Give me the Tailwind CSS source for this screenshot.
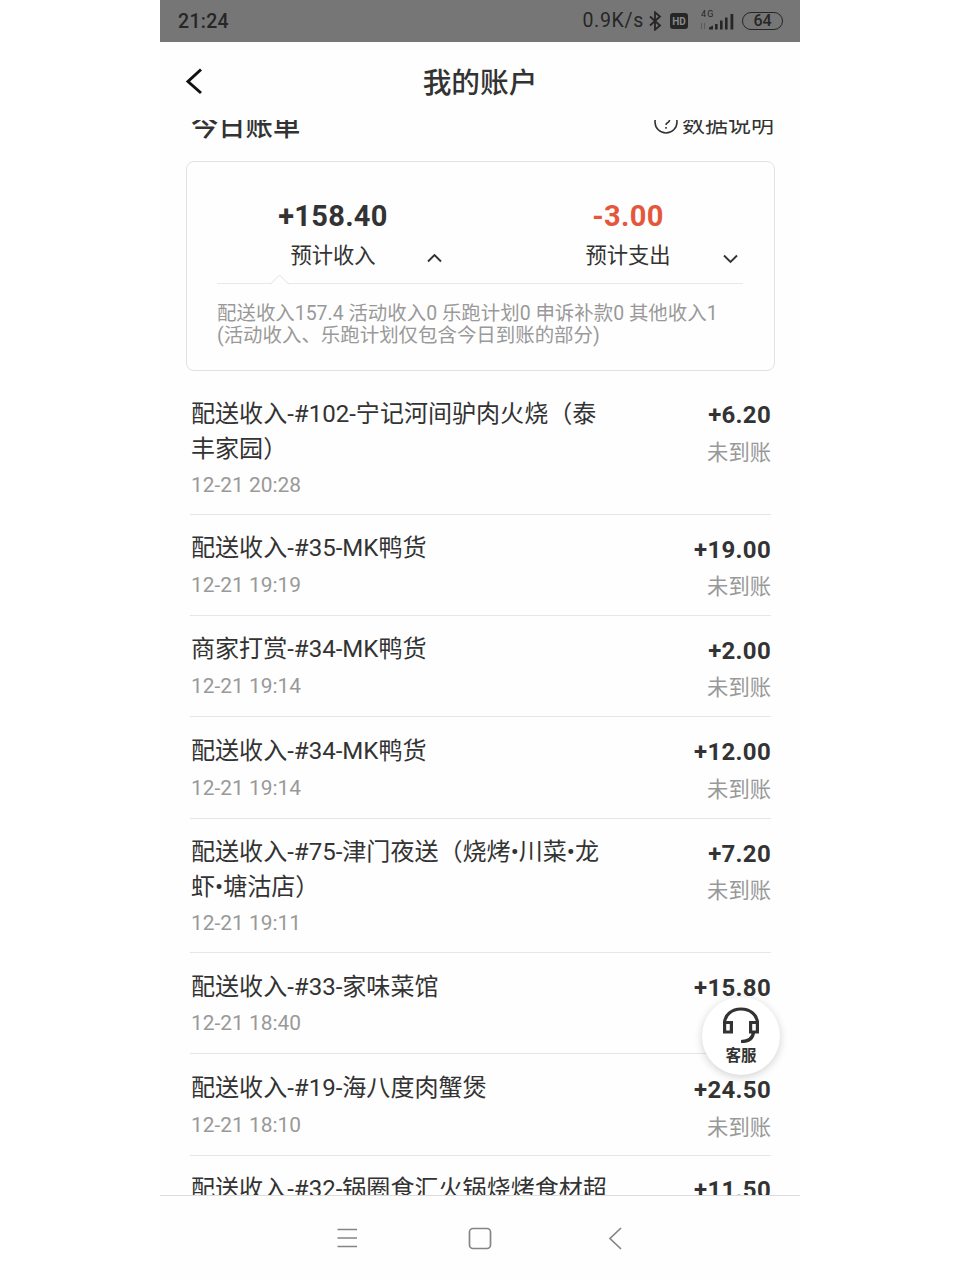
<!DOCTYPE html>
<html lang="zh-CN">
<head>
  <meta charset="UTF-8" />
  <meta name="viewport" content="width=device-width, initial-scale=1" />
  <title>我的账户</title>
  <script src="https://cdn.jsdelivr.net/npm/@tailwindcss/browser@4"></script>
</head>
<body class="bg-white font-[Roboto,'Noto_Sans_CJK_SC',sans-serif] text-[#333]">
  <div class="relative mx-auto flex h-[1280px] w-[640px] flex-col overflow-hidden bg-[#fefefe]">
    <!-- Status bar -->
    <div class="flex h-[42px] shrink-0 items-center justify-between bg-[#767676] pl-[18px] pr-[17px] text-[#262626]">
      <span class="pt-px text-[19.500px] font-medium leading-[42px] tracking-[0.3px]">21:24</span>
      <div class="flex items-center">
        <span class="text-[19.500px] leading-[42px] tracking-[0.7px]">0.9K/s</span>
        <svg class="ml-[4px] h-[20px] w-[14px]" viewBox="0 0 14 20" fill="none" stroke="currentColor" stroke-width="1.8"><path d="M2 5.500l10 9-5 4.200V1.300l5 4.200-10 9" /></svg>
        <span class="ml-[8px] flex h-[16px] w-[18px] items-center justify-center rounded-[3px] bg-[#262626] text-[10px] font-bold text-[#8a8a8a]">HD</span>
        <svg class="ml-[12px] h-[24px] w-[36px]" viewBox="0 0 36 24" fill="currentColor">
          <text x="1" y="7.500" font-size="9" textLength="12.500" font-family="Roboto">4G</text>
          <path d="M1 14h1v6H1zM4 14h1v6H4z" opacity=".35" />
          <path d="M9 20.500v-2l4-2v4zM15 15h2.600v5.500h-2.600zM20 11.500h2.600v9h-2.600zM25 8.500h2.600v12h-2.600zM30.500 5h2.800v15.500h-2.800z" />
        </svg>
        <span class="ml-[6px] flex h-[18px] w-[41px] items-center justify-center rounded-full border-[1.5px] border-[#262626] text-[16px] font-medium">64</span>
      </div>
    </div>

    <!-- Header -->
    <header class="grid h-[78px] shrink-0 grid-cols-[60px_1fr_60px] items-center">
      <svg class="-mt-px ml-[24px] h-[28px] w-[18px]" viewBox="0 0 18 28" fill="none" stroke="#111" stroke-width="3"><path d="M17 2.500L4 14.500L17 26" /></svg>
      <h1 class="pt-[4px] text-center text-[28.700px] font-medium leading-[74px]">我的账户</h1>
    </header>

    <!-- Scrolled content -->
    <main class="h-[1075px] shrink-0 overflow-hidden">
      <div class="-mt-[12px] flex h-[54px] items-start justify-between pl-[31px] pr-[26px]">
        <h2 class="text-[27.300px] font-medium leading-[39px]">今日账单</h2>
        <div class="flex items-center gap-[4px] text-[23px] leading-[33px]">
          <svg class="-mt-[5px] h-[24px] w-[24px]" viewBox="0 0 24 24" fill="none" stroke="#333" stroke-width="1.6"><circle cx="12" cy="12" r="11" /><path d="M8.500 9.500a3.500 3.500 0 1 1 5 3.200c-1 .5-1.500 1-1.500 2.300M12 17v1.800" /></svg>
          <span>数据说明</span>
        </div>
      </div>

      <!-- Today summary -->
      <section class="ml-[26px] mr-[25px] -mt-px h-[210px] rounded-[8px] border border-[#e2e2e2] pl-[30px] pr-[31px]">
        <div class="flex h-[121px] justify-between">
          <div class="relative w-[232px] pt-[36px] text-center">
            <div class="text-[29px] font-bold leading-[36px] tracking-[0.3px]">+158.40</div>
            <div class="pt-px text-[21.300px] leading-[42px]">预计收入</div>
            <svg class="absolute left-[209px] top-[91px] h-[10px] w-[17px]" viewBox="0 0 17 10" fill="none" stroke="#333" stroke-width="1.9"><path d="M2 8.500l6.500-6.500 6.500 6.500" /></svg>
          </div>
          <div class="relative w-[230px] pt-[36px] text-center">
            <div class="text-[29px] font-bold leading-[36px] tracking-[0.3px] text-[#e4573d]">-3.00</div>
            <div class="pt-px text-[21.300px] leading-[42px]">预计支出</div>
            <svg class="absolute left-[209px] top-[92px] h-[10px] w-[17px]" viewBox="0 0 17 10" fill="none" stroke="#333" stroke-width="1.9"><path d="M2 1.500l6.500 6.500 6.500-6.500" /></svg>
          </div>
        </div>
        <div class="relative border-t border-[#e8e8e8] pt-[19px] text-[19.450px] leading-[22.300px] text-[#999] whitespace-nowrap">
          <svg class="absolute -top-[10px] left-[53px] h-[11px] w-[19px]" viewBox="0 0 19 11" fill="#fefefe" stroke="#e0e0e0"><path d="M0 10.500L9.500 1l9.500 9.500" /></svg>
          <p>配送收入157.4 活动收入0 乐跑计划0 申诉补款0 其他收入1</p>
          <p>(活动收入、乐跑计划仅包含今日到账的部分)</p>
        </div>
      </section>

      <!-- Bill list -->
      <ul class="ml-[30px] mr-[29px] mt-[9px]">
        <li class="flex h-[135px] justify-between border-b border-[#e6e6e6] pl-px pt-[17px]">
          <div>
            <p class="text-[24.050px] leading-[35px] whitespace-nowrap">配送收入-#102-宁记河间驴肉火烧（泰<br />丰家园）</p>
            <p class="mt-[6px] text-[20.900px] leading-[24px] text-[#999]">12-21 20:28</p>
          </div>
          <div class="text-right">
            <p class="text-[24px] font-bold leading-[37px] tracking-[0.3px]">+6.20</p>
            <p class="text-[21.300px] leading-[37px] text-[#999]">未到账</p>
          </div>
        </li>
        <li class="flex h-[101px] justify-between border-b border-[#e6e6e6] pl-px pt-[16px]">
          <div>
            <p class="text-[24.050px] leading-[35px] whitespace-nowrap">配送收入-#35-MK鸭货</p>
            <p class="mt-[7px] text-[20.900px] leading-[24px] text-[#999]">12-21 19:19</p>
          </div>
          <div class="text-right">
            <p class="pt-px text-[24px] font-bold leading-[36px] tracking-[0.3px]">+19.00</p>
            <p class="text-[21.300px] leading-[37px] text-[#999]">未到账</p>
          </div>
        </li>
        <li class="flex h-[101px] justify-between border-b border-[#e6e6e6] pl-px pt-[16px]">
          <div>
            <p class="text-[24.050px] leading-[35px] whitespace-nowrap">商家打赏-#34-MK鸭货</p>
            <p class="mt-[7px] text-[20.900px] leading-[24px] text-[#999]">12-21 19:14</p>
          </div>
          <div class="text-right">
            <p class="pt-px text-[24px] font-bold leading-[36px] tracking-[0.3px]">+2.00</p>
            <p class="text-[21.300px] leading-[37px] text-[#999]">未到账</p>
          </div>
        </li>
        <li class="flex h-[102px] justify-between border-b border-[#e6e6e6] pl-px pt-[17px]">
          <div>
            <p class="text-[24.050px] leading-[35px] whitespace-nowrap">配送收入-#34-MK鸭货</p>
            <p class="mt-[7px] text-[20.900px] leading-[24px] text-[#999]">12-21 19:14</p>
          </div>
          <div class="text-right">
            <p class="text-[24px] font-bold leading-[37px] tracking-[0.3px]">+12.00</p>
            <p class="text-[21.300px] leading-[37px] text-[#999]">未到账</p>
          </div>
        </li>
        <li class="flex h-[134px] justify-between border-b border-[#e6e6e6] pl-px pt-[16px]">
          <div>
            <p class="text-[24.050px] leading-[35px] whitespace-nowrap">配送收入-#75-津门夜送（烧烤•川菜•龙<br />虾•塘沽店）</p>
            <p class="mt-[6px] text-[20.900px] leading-[24px] text-[#999]">12-21 19:11</p>
          </div>
          <div class="text-right">
            <p class="pt-px text-[24px] font-bold leading-[36px] tracking-[0.3px]">+7.20</p>
            <p class="text-[21.300px] leading-[37px] text-[#999]">未到账</p>
          </div>
        </li>
        <li class="flex h-[101px] justify-between border-b border-[#e6e6e6] pl-px pt-[17px]">
          <div>
            <p class="text-[24.050px] leading-[35px] whitespace-nowrap">配送收入-#33-家味菜馆</p>
            <p class="mt-[6px] text-[20.900px] leading-[24px] text-[#999]">12-21 18:40</p>
          </div>
          <div class="text-right">
            <p class="text-[24px] font-bold leading-[37px] tracking-[0.3px]">+15.80</p>
            <p class="text-[21.300px] leading-[37px] text-[#999]">未到账</p>
          </div>
        </li>
        <li class="flex h-[102px] justify-between border-b border-[#e6e6e6] pl-px pt-[17px]">
          <div>
            <p class="text-[24.050px] leading-[35px] whitespace-nowrap">配送收入-#19-海八度肉蟹煲</p>
            <p class="mt-[7px] text-[20.900px] leading-[24px] text-[#999]">12-21 18:10</p>
          </div>
          <div class="text-right">
            <p class="pt-px text-[24px] font-bold leading-[37px] tracking-[0.3px]">+24.50</p>
            <p class="text-[21.300px] leading-[37px] text-[#999]">未到账</p>
          </div>
        </li>
        <li class="flex h-[101px] justify-between pl-px pt-[16px]">
          <p class="text-[24.050px] leading-[35px] whitespace-nowrap">配送收入-#32-锅圈食汇火锅烧烤食材超</p>
          <p class="text-[24px] font-bold leading-[37px] tracking-[0.3px]">+11.50</p>
        </li>
      </ul>
    </main>

    <!-- Navigation bar -->
    <nav class="relative flex flex-1 items-start border-t border-[#dcdcdc] bg-[#fefefe] pl-[176px] pt-[31px] text-[#858585]">
      <svg class="h-[24px] w-[22px]" viewBox="0 0 22 24" fill="none" stroke="currentColor" stroke-width="1.4"><path d="M1.500 2.500h19.500M1.500 11h19.500M1.500 19.500h19.500" /></svg>
      <svg class="ml-[110px] h-[24px] w-[24px]" viewBox="0 0 24 24" fill="none" stroke="currentColor" stroke-width="1.7"><rect x="1.500" y="1.500" width="21" height="20" rx="3.500" /></svg>
      <svg class="ml-[116px] h-[24px] w-[15px]" viewBox="0 0 15 24" fill="none" stroke="currentColor" stroke-width="1.7"><path d="M13 1L2 11.500l11 10.500" /></svg>
    </nav>

    <!-- Customer service button -->
    <button class="absolute left-[542px] top-[997px] flex h-[78px] w-[78px] flex-col items-center rounded-full bg-white pt-[10px] shadow-[0_2px_8px_rgba(0,0,0,0.18)]">
      <svg class="h-[38px] w-[38px]" viewBox="0 0 38 38" fill="none" stroke="#333" stroke-width="3.2"><path d="M2.500 17C2.500 7.500 10 2 19 2s16.500 5.500 16.500 15" /><path d="M2.600 15.500h6.800v9.500H2.600zM28.600 15.500h6.800v9.500h-6.800z" /><path d="M31.500 25c-.5 6-4 9.500-12.500 9.500" /></svg>
      <span class="text-[15.500px] font-bold leading-[23px]">客服</span>
    </button>
  </div>
</body>
</html>
